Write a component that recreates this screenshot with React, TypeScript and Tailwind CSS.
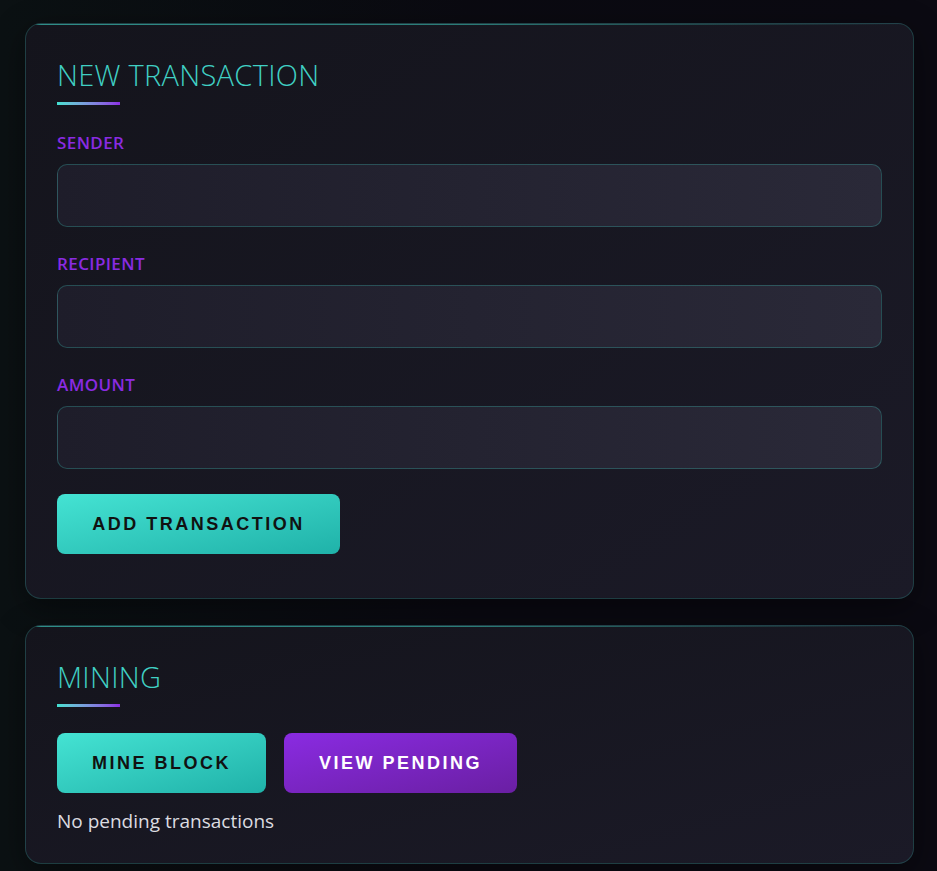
import React from 'react'

const fields = ['Sender', 'Recipient', 'Amount']

function Card({ title, children }: { title: string; children: React.ReactNode }) {
  return (
    <section className="relative overflow-hidden rounded-2xl border border-[#40e0d0]/20 bg-gradient-to-br from-[#14141c] to-[#1b1a27] px-[31px] pt-[31px] shadow-[0_8px_32px_rgba(0,0,0,0.4)]">
      <div className="absolute left-0 right-0 top-0 h-px bg-gradient-to-r from-[#40e0d0]/60 via-[#40e0d0]/50 to-transparent" />
      <h2 className="text-[29px] font-light leading-[40px] tracking-[0.3px] text-[#40d0c4]">{title}</h2>
      <div className="mt-[7px] h-[3px] w-[63px] bg-gradient-to-r from-[#40e0d0] to-[#8a2be2]" />
      {children}
    </section>
  )
}

export default function App() {
  return (
    <div className="min-h-screen bg-gradient-to-br from-[#0a0a10] via-[#0b0a12] to-[#0b0a12] font-['Open_Sans',sans-serif]">
      <div className="min-h-screen bg-gradient-to-r from-[#0b1113] via-transparent to-transparent pl-[25px] pr-[23px] pt-[23px]">
        <div className="flex flex-col gap-[26px]">
          <Card title="NEW TRANSACTION">
            <form className="flex flex-col pb-[44px] pt-[26px]" onSubmit={(e) => e.preventDefault()}>
              <div className="flex flex-col gap-[25px]">
                {fields.map((f) => (
                  <div key={f} className="flex flex-col">
                    <label className="text-[17px] font-semibold uppercase leading-[24px] tracking-[0.4px] text-[#8a2be2]">
                      {f}
                    </label>
                    <input
                      className="mt-[9px] h-[63px] rounded-[10px] border border-[#40e0d0]/25 bg-gradient-to-r from-[#1e1d2a] to-[#2a2938] px-4 text-white outline-none"
                      type="text"
                    />
                  </div>
                ))}
              </div>
              <button className="mt-[25px] h-[60px] w-[283px] rounded-lg bg-gradient-to-br from-[#44e3d3] to-[#1fb2a9] font-['Liberation_Sans',Arial,sans-serif] text-[18px] font-bold tracking-[2.5px] text-[#111]">
                ADD TRANSACTION
              </button>
            </form>
          </Card>
          <Card title="MINING">
            <div className="flex gap-[18px] pt-[26px]">
              <button className="h-[60px] w-[209px] rounded-lg bg-gradient-to-br from-[#44e3d3] to-[#1fb2a9] font-['Liberation_Sans',Arial,sans-serif] text-[18px] font-bold tracking-[2.5px] text-[#111]">
                MINE BLOCK
              </button>
              <button className="h-[60px] w-[233px] rounded-lg bg-gradient-to-br from-[#8a2be2] to-[#6a1fa3] font-['Liberation_Sans',Arial,sans-serif] text-[18px] font-bold tracking-[2.5px] text-white">
                VIEW PENDING
              </button>
            </div>
            <p className="pb-[28px] pt-[14px] text-[19px] leading-[28px] text-[#dcdce0]">No pending transactions</p>
          </Card>
        </div>
      </div>
    </div>
  )
}
